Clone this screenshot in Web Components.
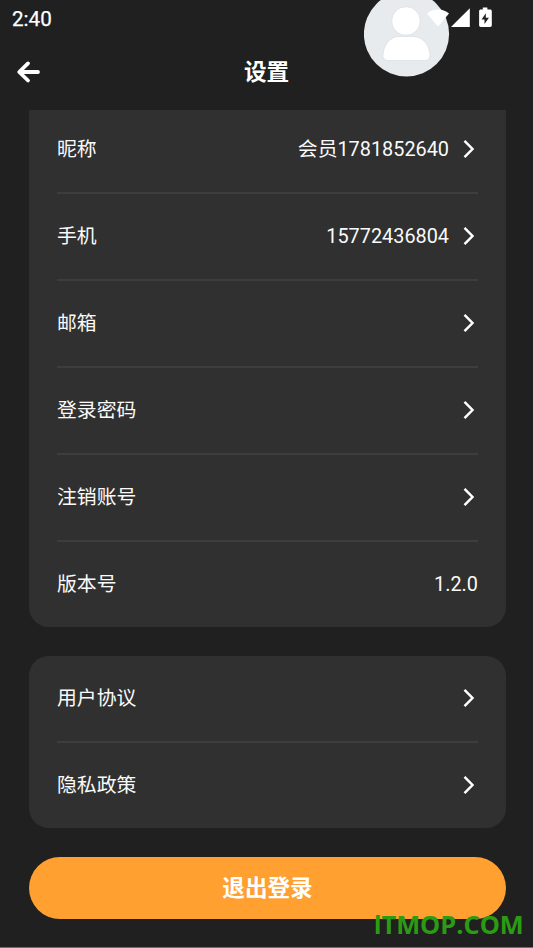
<!DOCTYPE html>
<html lang="zh-CN">
<head>
<meta charset="utf-8">
<title>设置</title>
<style>
html,body{margin:0;height:948px;overflow:hidden;background:#202020}
body{font-family:Roboto,"Noto Sans CJK SC",sans-serif;color:#fff}
</style>
</head>
<body>
<settings-screen></settings-screen>
<script>
function define(name, html, setup) {
  const template = document.createElement('template');
  template.innerHTML = html;
  customElements.define(name, class extends HTMLElement {
    constructor() {
      super();
      this.attachShadow({mode: 'open'}).append(template.content.cloneNode(true));
    }
    connectedCallback() { if (setup) setup(this, this.shadowRoot); }
  });
}

define('user-avatar', `
<style>:host{display:block;width:86px;height:77px}svg{display:block}</style>
<svg width="86" height="77" viewBox="0 0 86 77">
  <circle cx="42.5" cy="34" r="42.6" fill="#e7ebee"/>
  <g fill="#fff" stroke="#d5d8da" stroke-width=".6">
    <circle cx="42" cy="21" r="14.3"/>
    <path d="M34 36.5H50C59.5 37.5 65.3 45 66 55C66.1 58.5 64 60.6 60 60.6H25C21 60.6 18.6 58.5 18.9 55C19.9 45 25 37.5 34 36.5Z"/>
  </g>
</svg>`);

define('status-bar', `
<style>
:host{display:flex;position:relative;z-index:1;height:38px;box-sizing:border-box;padding:0 41px 0 12px;justify-content:space-between;align-items:center}
span{font-size:20.6px;font-weight:400;line-height:38px;-webkit-text-stroke:.25px #fff}
svg{display:block}
</style>
<span>2:40</span>
<svg width="67" height="24" viewBox="0 0 67 24" fill="#fff">
  <path d="M2 6.4C8.2 1.3 17.8 1.3 24 6.4L13 19.5Z"/>
  <path d="M44.8 1.2V20H26Z"/>
  <path fill-rule="evenodd" d="M58.7 .5H63.3V2.5H66C67 2.5 67.7 3.2 67.7 4.2V18.3C67.7 19.4 67 20 66 20H56.7C55.7 20 55 19.4 55 18.3V4.2C55 3.2 55.7 2.5 56.7 2.5H58.7ZM61.7 6.3L57.5 12.4H60.4V17L64.8 10.8H61.7Z" transform="translate(-.9 0)"/>
</svg>`);

define('page-header', `
<style>
:host{display:grid;grid-template-columns:60px 1fr 60px;height:72px;align-items:center}
svg{display:block;margin-left:16px;margin-bottom:4px}
h1{margin:0;padding-bottom:3px;text-align:center;font-size:22.6px;line-height:32px;font-weight:700}
</style>
<svg width="26" height="24" viewBox="0 0 26 24" fill="none" stroke="#fff" stroke-width="3.8" stroke-linecap="round" stroke-linejoin="round"><path d="M12 3.4L3.2 12L12 20.5M3.8 12H22"/></svg>
<h1><slot></slot></h1>`);

define('setting-row', `
<style>
:host{display:flex;height:var(--row-height,87.1px);box-sizing:border-box;align-items:center;font-size:19.85px;line-height:30px;border-bottom:2px solid #3d3d3d;color:#fafafa}
:host(:last-child){border-bottom-color:transparent}
.label{flex:1}
svg{display:block;margin:0 3px 2px 13px}
:host([plain]) svg{display:none}
</style>
<span class="label"><slot></slot></span>
<span class="value"></span>
<svg width="13" height="20" viewBox="0 0 13 20" fill="none" stroke="#fff" stroke-width="2.5"><path d="M2.5 1.8L10.5 10L2.5 18.2"/></svg>
`, (host, root) => { root.querySelector('.value').textContent = host.getAttribute('value') || ''; });

define('settings-card', `
<style>:host{display:block;box-sizing:border-box;padding:0 28px;border-radius:20px;background:#303030}</style>
<slot></slot>`);

define('logout-button', `
<style>
:host{display:block}
button{display:block;width:100%;height:62px;padding:1px 0 0;border:0;border-radius:31px;background:#ffa030;color:#fff;font:700 22.6px/32px Roboto,"Noto Sans CJK SC",sans-serif}
</style>
<button><slot></slot></button>`);

define('site-watermark', `
<style>
:host{display:block;color:#2c9b14;white-space:nowrap}
div{font:700 25.4px/30px "Open Sans","Noto Sans",sans-serif}
div::first-letter{font-family:Roboto,sans-serif}
</style>
<div>ITMOP.COM</div>`);

define('settings-screen', `
<style>
:host{display:flex;flex-direction:column;position:relative;width:533px;height:948px;box-sizing:border-box;overflow:hidden;background:#202020;border-bottom:1px solid #707070}
user-avatar{position:absolute;left:364px;top:0}
main{flex:1;overflow:hidden;padding:0 27px 0 29px}
.scroll{display:flex;flex-direction:column;gap:29px;margin-top:-20px}
.account{height:537px;padding-top:17px}
.legal{height:172px;--row-height:87px}
site-watermark{position:absolute;left:374px;top:909px}
</style>
<user-avatar></user-avatar>
<status-bar></status-bar>
<page-header>设置</page-header>
<main><div class="scroll">
  <settings-card class="account">
    <setting-row value="会员1781852640">昵称</setting-row>
    <setting-row value="15772436804">手机</setting-row>
    <setting-row>邮箱</setting-row>
    <setting-row>登录密码</setting-row>
    <setting-row>注销账号</setting-row>
    <setting-row plain value="1.2.0">版本号</setting-row>
  </settings-card>
  <settings-card class="legal">
    <setting-row>用户协议</setting-row>
    <setting-row>隐私政策</setting-row>
  </settings-card>
  <logout-button>退出登录</logout-button>
</div></main>
<site-watermark></site-watermark>`);
</script>
</body>
</html>
